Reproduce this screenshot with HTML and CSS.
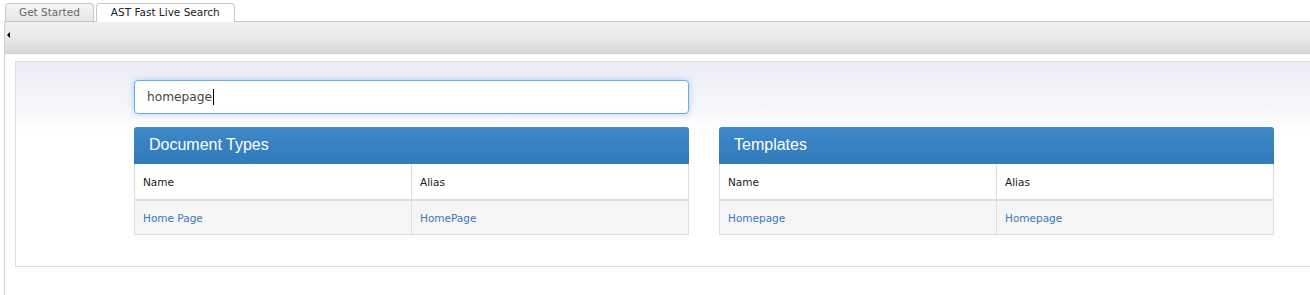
FILE: index.html
```html
<!DOCTYPE html>
<html lang="en">
<head>
<meta charset="UTF-8" />
<meta name="viewport" content="width=device-width, initial-scale=1" />
<title>AST Fast Live Search</title>
<link rel="stylesheet" href="styles.css">
</head>
<body>

<div class="tabs">
  <div class="tab">Get Started</div>
  <div class="tab active">AST Fast Live Search</div>
</div>

<div class="tab-body">
  <div class="toolbar">
    <span class="collapse-arrow"></span>
  </div>

  <div class="panel">
    <div class="container">
      <div class="search-box">
        <span class="search-text">homepage</span><span class="caret"></span>
      </div>

      <div class="results">
        <!-- Document types -->
        <div class="result-box">
          <div class="result-head">Document Types</div>
          <table class="result-table">
            <thead>
              <tr><th>Name</th><th>Alias</th></tr>
            </thead>
            <tbody>
              <tr><td><a href="#">Home Page</a></td><td><a href="#">HomePage</a></td></tr>
            </tbody>
          </table>
        </div>

        <!-- Templates -->
        <div class="result-box">
          <div class="result-head">Templates</div>
          <table class="result-table">
            <thead>
              <tr><th>Name</th><th>Alias</th></tr>
            </thead>
            <tbody>
              <tr><td><a href="#">Homepage</a></td><td><a href="#">Homepage</a></td></tr>
            </tbody>
          </table>
        </div>
      </div>
    </div>
  </div>
</div>

</body>
</html>
```

FILE: styles.css
```css
body {
  margin: 0;
  padding: 0;
  background: #fff;
  font-family: "DejaVu Sans", Verdana, sans-serif;
  font-size: 10.5px;
  color: #222;
  overflow: hidden;
}

/* Tabs */
.tabs {
  display: flex;
  gap: 2px;
  padding: 3px 0 0 5px;
  height: 18px;
}
.tab {
  height: 17px;
  line-height: 17px;
  padding: 0 13px;
  border: 1px solid #c9c9c9;
  border-bottom: none;
  border-radius: 4px 4px 0 0;
  background: linear-gradient(#f6f6f6, #e6e6e6);
  color: #666;
}
.tab.active {
  padding: 0 14px;
  background: #fff;
  color: #222;
  height: 18px;
  margin-bottom: -1px;
  position: relative;
}

/* Tab body */
.tab-body {
  margin-left: 4px;
  border-left: 1px solid #cfcfcf;
  height: calc(100vh - 21px);
}
.toolbar {
  height: 31px;
  border-top: 1px solid #c6c6c6;
  border-bottom: 1px solid #cfcfcf;
  background: linear-gradient(#f0f0f0, #e9e9e9 50%, #d9d9d9);
  display: flex;
  align-items: center;
  padding-left: 2px;
}
.collapse-arrow {
  width: 0;
  height: 0;
  margin-bottom: 5px;
  border-top: 3px solid transparent;
  border-bottom: 3px solid transparent;
  border-right: 3px solid #000;
}

/* Panel (right edge runs off the window) */
.panel {
  margin: 7px 0 0 10px;
  border: 1px solid #ddd;
  border-right: none;
  background: linear-gradient(#ebecf5, #f6f6fa 45px, #fff 70px);
  padding: 18px 0 31px 103px;
}
.container {
  width: 1140px;
  padding: 0 15px;
}

.search-box {
  width: 555px;
  height: 34px;
  box-sizing: border-box;
  border: 1px solid #66afe9;
  border-radius: 4px;
  background: #fff;
  box-shadow: 0 0 6px rgba(102, 175, 233, 0.55);
  display: flex;
  align-items: center;
  padding-left: 12px;
  font-size: 12.2px;
  color: #444;
}
.caret {
  display: inline-block;
  width: 1px;
  height: 16px;
  background: #000;
  margin-left: 1px;
}

.results {
  display: flex;
  gap: 30px;
  margin-top: 13px;
}
.result-box {
  width: 555px;
}
.result-head {
  height: 37px;
  line-height: 36px;
  padding-left: 15px;
  border-radius: 3px 3px 0 0;
  background: linear-gradient(#3d89ca, #3179b9);
  color: #fff;
  font-family: "Liberation Sans", Arial, sans-serif;
  font-size: 16px;
}

.result-table {
  width: 100%;
  border-collapse: collapse;
  table-layout: fixed;
  border: 1px solid #ddd;
  border-top: none;
}
.result-table th,
.result-table td {
  text-align: left;
  padding: 0 8px;
  border-left: 1px solid #ddd;
  font-weight: normal;
}
.result-table th {
  height: 35px;
  background: #fff;
  color: #1a1a1a;
  border-bottom: 2px solid #ddd;
}
.result-table td {
  height: 33px;
  background: #f5f5f5;
}
.result-table a {
  color: #3f78b4;
  text-decoration: none;
}
```
